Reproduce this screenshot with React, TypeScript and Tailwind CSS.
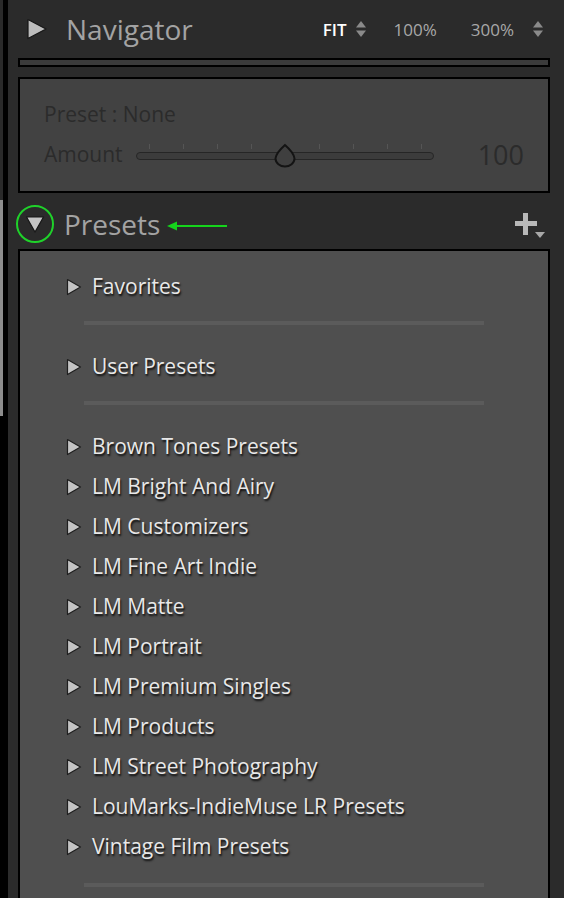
import React from "react"

const presets = [
  "Brown Tones Presets",
  "LM Bright And Airy",
  "LM Customizers",
  "LM Fine Art Indie",
  "LM Matte",
  "LM Portrait",
  "LM Premium Singles",
  "LM Products",
  "LM Street Photography",
  "LouMarks-IndieMuse LR Presets",
  "Vintage Film Presets",
]

const font = { fontFamily: '"Open Sans", "Noto Sans", sans-serif' }

function RightTri() {
  return (
    <svg width="16" height="18" viewBox="0 0 16 18" className="shrink-0">
      <polygon points="1.5,1.5 14.5,9 1.5,16.5" fill="#c4c4c4" stroke="#1f1f1f" strokeWidth="1.2" strokeLinejoin="round" />
    </svg>
  )
}

function UpDown() {
  return (
    <svg width="12" height="18" viewBox="0 0 12 18">
      <polygon points="6,1 11,7.5 1,7.5" fill="#8a8a8a" />
      <polygon points="6,17 11,10.5 1,10.5" fill="#8a8a8a" />
    </svg>
  )
}

function Separator() {
  return <div className="mx-[64px] h-[4px] bg-[#5b5b5b]" />
}

function PresetRow({ label }: { label: string }) {
  return (
    <div className="flex h-[40px] items-center gap-[10px] pl-[46px] pt-[3px]">
      <RightTri />
      <span
        className="text-[21px] leading-none text-[#e8e8e8]"
        style={{ textShadow: "1px 2px 2px rgba(0,0,0,0.85)" }}
      >
        {label}
      </span>
    </div>
  )
}

function Slider() {
  const ticks = [149, 183, 217, 251, 285, 319, 353, 387, 421]
  return (
    <div className="relative h-[26px] w-[298px]">
      {ticks.map((x) => (
        <div key={x} className="absolute top-[2px] h-[5px] w-px bg-[#555]" style={{ left: x - 136 }} />
      ))}
      <div className="absolute left-0 right-0 top-[10px] h-[8px] rounded-full border-[1.5px] border-[#262626] bg-[#3c3c3c]" />
      <svg width="26" height="26" viewBox="0 0 26 26" className="absolute left-[136px] top-[1px]">
        <path d="M13 2 C13 2 4 10 3.5 15.5 C3.5 20 8 23.5 13 23.5 C18 23.5 22.5 20 22.5 15.5 C22 10 13 2 13 2 Z" fill="#3f3f3f" stroke="#141414" strokeWidth="2" />
      </svg>
    </div>
  )
}

export default function App() {
  return (
    <div className="flex h-[898px] w-[564px] overflow-hidden bg-[#2b2b2b]" style={font}>
      {/* left edge */}
      <div className="flex h-full w-[8px] shrink-0">
        <div className="flex h-full w-[3px] flex-col">
          <div className="h-[200px] bg-[#2a2a2a]" />
          <div className="h-[216px] bg-[#8d8d8d]" />
          <div className="flex-1 bg-black" />
        </div>
        <div className="h-full w-[5px] bg-black" />
      </div>

      {/* main column */}
      <div className="flex min-w-0 flex-1 flex-col">
        {/* Navigator header */}
        <div className="flex h-[58px] shrink-0 items-center pl-[18px] pr-[16px]">
          <svg width="22" height="22" viewBox="0 0 22 22" className="mr-[18px]">
            <polygon points="2,1.5 20,11 2,20.5" fill="#bdbdbd" stroke="#161616" strokeWidth="1.2" strokeLinejoin="round" />
          </svg>
          <span className="text-[28px] leading-none text-[#a3a3a3]">Navigator</span>
          <div className="ml-auto flex items-center text-[17px] leading-none">
            <span className="font-semibold text-white">FIT</span>
            <span className="ml-[8px]"><UpDown /></span>
            <span className="ml-[27px] text-[#a8a8a8]">100%</span>
            <span className="ml-[34px] text-[#a8a8a8]">300%</span>
            <span className="ml-[18px]"><UpDown /></span>
          </div>
        </div>

        {/* collapsed navigator preview */}
        <div className="mx-[10px] h-[9px] shrink-0 border-2 border-black bg-[#3b3b3b]" />

        {/* preset amount panel */}
        <div className="mx-[10px] mt-[10px] flex h-[116px] shrink-0 flex-col border-2 border-black bg-[#424242] px-[24px] pt-[25px] text-[#2b2b2b]">
          <div className="text-[21px] leading-none">Preset : None</div>
          <div className="mt-[16px] flex items-center">
            <span className="w-[92px] text-[21px] leading-none">Amount</span>
            <Slider />
            <span className="ml-auto text-[27px] leading-none">100</span>
          </div>
        </div>

        {/* Presets header */}
        <div className="flex h-[56px] shrink-0 items-center pl-[8px] pr-[10px] pt-[6px]">
          <div className="flex h-[38px] w-[38px] items-center justify-center rounded-full border-2 border-[#1fd22a]">
            <svg width="20" height="20" viewBox="0 0 20 20">
              <polygon points="1.5,3 18.5,3 10,18" fill="#c4c4c4" stroke="#161616" strokeWidth="1.2" strokeLinejoin="round" />
            </svg>
          </div>
          <span className="ml-[10px] text-[28px] leading-none text-[#a3a3a3]">Presets</span>
          <svg width="64" height="14" viewBox="0 0 64 14" className="ml-[7px] mt-[4px]">
            <line x1="8" y1="7" x2="60" y2="7" stroke="#15d41c" strokeWidth="2" />
            <polygon points="0,7 10,2.5 10,11.5" fill="#15d41c" />
          </svg>
          <div className="relative ml-auto mr-[6px] h-[26px] w-[30px]">
            <div className="absolute left-[1px] top-[10px] h-[5px] w-[22px] bg-[#b8b8b8]" />
            <div className="absolute left-[9px] top-[2px] h-[22px] w-[5px] bg-[#b8b8b8]" />
            <svg width="10" height="6" viewBox="0 0 10 6" className="absolute left-[21px] top-[21px]">
              <polygon points="0,0 10,0 5,6" fill="#a8a8a8" />
            </svg>
          </div>
        </div>

        {/* Presets list */}
        <div className="mx-[10px] flex-1 border-2 border-b-0 border-black bg-[#4f4f4f] pt-[14px]">
          <PresetRow label="Favorites" />
          <div className="mt-[16px] mb-[20px]"><Separator /></div>
          <PresetRow label="User Presets" />
          <div className="mt-[16px] mb-[20px]"><Separator /></div>
          {presets.map((p) => (
            <PresetRow key={p} label={p} />
          ))}
          <div className="mt-[18px]"><Separator /></div>
        </div>
      </div>

      {/* right edge */}
      <div className="h-full w-[4px] shrink-0" />
    </div>
  )
}
